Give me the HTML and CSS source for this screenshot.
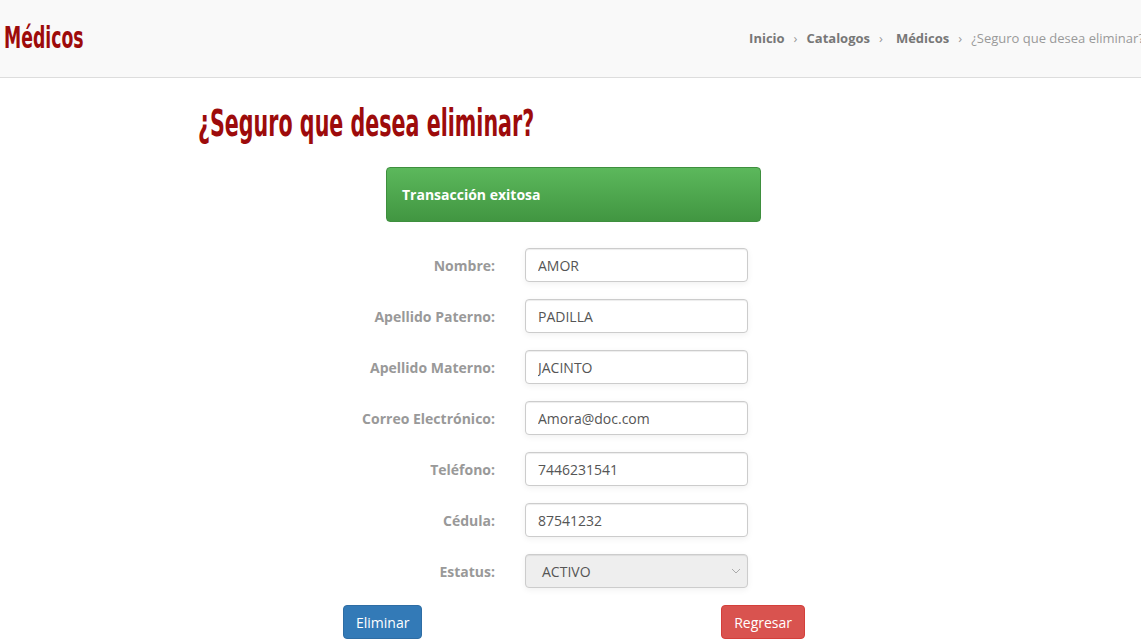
FILE: index.html
```html
<!DOCTYPE html>
<html lang="es">
<head>
<meta charset="utf-8">
<title>Médicos</title>
<link rel="stylesheet" href="styles.css">
</head>
<body>
<header class="topbar">
  <h1 class="brand"><span class="narrow">Médicos</span></h1>
  <nav class="crumbs">
    <a href="#">Inicio</a><span class="sep">›</span>
    <a href="#">Catalogos</a><span class="sep">›</span>
    <a href="#" class="wide">Médicos</a><span class="sep">›</span>
    <span class="current">¿Seguro que desea eliminar?</span>
  </nav>
</header>
<main class="content">
  <h2 class="title"><span class="narrow">¿Seguro que desea eliminar?</span></h2>
  <div class="alert">Transacción exitosa</div>
  <form class="form">
    <div class="row"><label>Nombre:</label><input class="field" value="AMOR"></div>
    <div class="row"><label>Apellido Paterno:</label><input class="field" value="PADILLA"></div>
    <div class="row"><label>Apellido Materno:</label><input class="field" value="JACINTO"></div>
    <div class="row"><label>Correo Electrónico:</label><input class="field" value="Amora@doc.com"></div>
    <div class="row"><label>Teléfono:</label><input class="field" value="7446231541"></div>
    <div class="row"><label>Cédula:</label><input class="field" value="87541232"></div>
    <div class="row"><label>Estatus:</label>
      <div class="field select"><span>ACTIVO</span>
        <svg class="caret" width="10" height="6" viewBox="0 0 10 6"><path d="M1 1l4 4 4-4" fill="none" stroke="#aaa" stroke-width="1"/></svg>
      </div>
    </div>
    <div class="actions">
      <button type="button" class="btn btn-primary">Eliminar</button>
      <button type="button" class="btn btn-danger">Regresar</button>
    </div>
  </form>
</main>
</body>
</html>
```

FILE: styles.css
```css
* { box-sizing: border-box; }
html, body { margin: 0; padding: 0; }
body {
  font-family: "Open Sans", "Liberation Sans", sans-serif;
  font-size: 14px;
  color: #555;
  background: #fff;
  overflow: hidden;
}
.narrow {
  display: inline-block;
  transform-origin: 0 50%;
  white-space: nowrap;
}
.topbar {
  height: 78px;
  background: #f9f9f9;
  border-bottom: 1px solid #ddd;
  display: flex;
  align-items: center;
  justify-content: space-between;
  padding: 0 0 0 4px;
  white-space: nowrap;
}
.brand {
  margin: 0;
  font-family: "DejaVu Sans", sans-serif;
  font-stretch: condensed;
  font-weight: bold;
  font-size: 30px;
  color: #9d0b0b;
  padding-bottom: 3px;
}
.brand .narrow { transform: scaleX(0.64); }
.crumbs {
  font-size: 13px;
  color: #999;
  display: flex;
  align-items: center;
  margin-right: -3px;
  padding-bottom: 2px;
}
.crumbs a {
  color: #777;
  font-weight: bold;
  text-decoration: none;
}
.crumbs .sep {
  color: #999;
  padding: 0 9px;
}
.crumbs .wide { margin-left: 4px; }
.crumbs .current { color: #999; }
.title {
  margin: 23px 0 0 198px;
  font-family: "DejaVu Sans", sans-serif;
  font-stretch: condensed;
  font-weight: bold;
  font-size: 37px;
  line-height: 46px;
  color: #9d0b0b;
}
.title .narrow { transform: scaleX(0.62); }
.alert {
  margin: 20px 0 0 386px;
  width: 375px;
  height: 55px;
  border-radius: 4px;
  background: linear-gradient(to bottom, #5cb85c 0%, #419641 100%);
  border: 1px solid #3e8f3e;
  color: #fff;
  font-weight: bold;
  font-size: 14px;
  display: flex;
  align-items: center;
  padding-left: 15px;
}
.form {
  margin-top: 26px;
}
.row {
  display: flex;
  align-items: center;
  height: 34px;
  margin-bottom: 17px;
}
.row label {
  width: 495px;
  text-align: right;
  font-weight: bold;
  color: #999;
}
.field {
  margin-left: 30px;
  width: 223px;
  height: 34px;
  border: 1px solid #ccc;
  border-radius: 4px;
  padding: 6px 12px;
  font-family: "Open Sans", "Liberation Sans", sans-serif;
  font-size: 14px;
  color: #555;
  background: #fff;
  box-shadow: inset 0 1px 1px rgba(0,0,0,.075), 0 2px 6px rgba(0,0,0,.06);
}
.select {
  background: #eee;
  display: flex;
  align-items: center;
  justify-content: space-between;
  padding-left: 16px;
  padding-right: 6px;
}
.actions {
  display: flex;
  justify-content: space-between;
  width: 462px;
  margin: 1px 0 0 343px;
}
.btn {
  height: 34px;
  border-radius: 4px;
  border: 1px solid transparent;
  font-family: "Open Sans", "Liberation Sans", sans-serif;
  font-size: 14px;
  color: #fff;
  padding: 6px 12px;
}
.btn-primary { background: #337ab7; border-color: #2e6da4; }
.btn-danger { background: #d9534f; border-color: #d43f3a; }
```
